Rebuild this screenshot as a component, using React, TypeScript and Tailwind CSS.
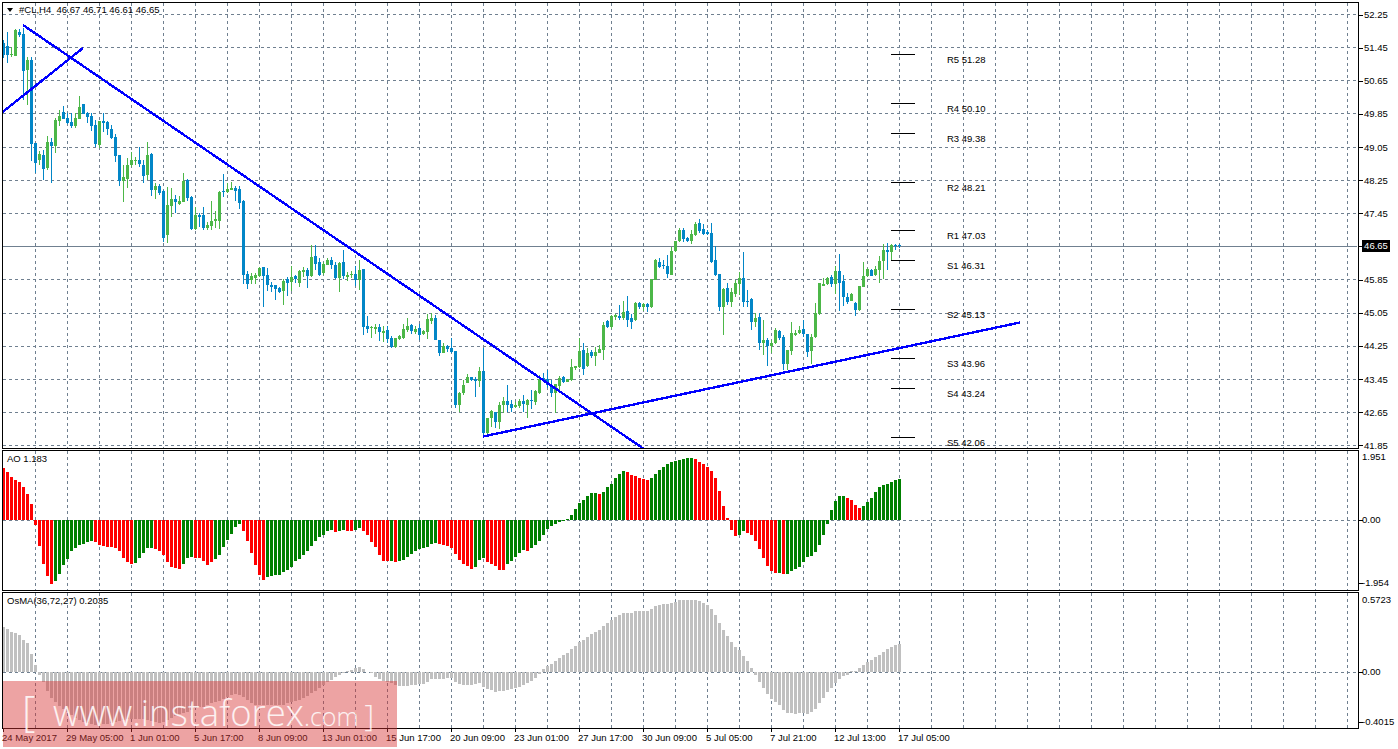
const GRID = '#708090'
const GREEN = '#4cb748'
const BLUE = '#0286c7'

// hi, bodyTop, bodyBottom, lo in page pixels, 1 = up candle
const candles: number[][] = [
  [40,43,55,58,0],[32,46,55,63,0],[47,54,55,57,1],[29,30,56,56,1],[29,32,35,37,0],[28,34,71,100,0],[57,60,70,105,1],[57,60,144,161,0],
  [143,143,163,173,0],[151,154,160,165,1],[150,155,169,180,0],[136,142,168,170,1],[138,142,146,183,0],[118,120,146,153,1],[110,116,121,126,1],[106,112,119,119,0],
  [113,118,123,124,0],[113,122,126,128,0],[113,118,126,128,1],[96,107,119,119,1],[104,104,114,114,0],[112,113,117,123,0],[113,116,126,131,0],[120,125,144,147,0],
  [121,121,145,148,1],[113,121,123,132,0],[121,122,129,135,0],[125,129,138,139,0],[134,137,156,162,0],[155,155,181,186,0],[165,177,181,202,1],[158,165,179,188,1],
  [152,160,165,167,1],[157,160,161,165,1],[147,160,164,167,0],[160,165,176,183,0],[142,155,175,180,1],[153,154,190,196,0],[183,186,190,199,1],[184,186,193,195,0],
  [190,191,238,242,0],[187,205,235,243,1],[188,199,206,217,1],[195,199,202,213,0],[196,201,204,205,1],[173,181,202,202,1],[179,180,198,201,0],[196,197,229,230,0],
  [207,215,229,230,1],[213,215,217,227,0],[207,215,228,230,0],[222,225,228,230,1],[201,221,226,230,1],[211,219,221,228,1],[191,192,221,229,1],[174,191,192,197,0],
  [183,189,192,193,1],[182,188,190,190,1],[186,188,191,201,0],[186,189,203,209,0],[200,201,275,284,0],[271,274,284,289,0],[273,276,280,284,1],[273,275,278,284,1],
  [267,268,276,277,1],[267,267,276,307,0],[268,275,285,291,0],[282,285,287,292,0],[285,285,289,300,0],[287,288,292,293,0],[279,281,291,305,1],[277,279,283,296,0],
  [266,277,282,291,1],[275,276,279,283,0],[270,271,283,287,1],[267,270,272,277,1],[268,270,276,288,0],[245,257,276,277,1],[245,256,264,270,0],[258,262,275,276,0],
  [262,264,273,275,1],[258,260,265,265,1],[257,260,265,269,0],[262,265,278,279,0],[262,263,278,292,1],[250,262,276,279,0],[272,275,277,281,1],[271,274,275,278,1],
  [266,274,280,286,0],[260,270,280,290,1],[269,269,327,335,0],[316,326,329,333,0],[326,327,328,338,1],[324,327,329,334,1],[324,327,332,341,0],[326,331,333,342,1],
  [326,330,339,343,0],[336,338,347,348,0],[338,338,347,348,1],[335,336,339,340,1],[324,329,338,339,1],[318,326,330,332,1],[324,325,331,334,0],[326,329,332,334,1],
  [324,328,335,340,0],[330,331,334,335,1],[314,319,332,339,1],[313,318,321,324,1],[315,318,340,340,0],[340,340,353,356,0],[343,346,353,353,1],[345,346,349,352,0],
  [338,348,352,353,0],[351,351,405,408,0],[392,393,405,412,1],[380,385,393,395,1],[374,377,383,383,1],[377,377,380,381,0],[377,379,381,397,0],[367,371,381,387,1],
  [348,371,433,435,0],[418,418,433,436,1],[410,411,418,427,1],[412,412,422,428,0],[402,405,422,429,1],[397,401,405,413,1],[385,401,405,412,0],[400,404,408,412,0],
  [402,405,407,408,1],[399,401,406,408,1],[395,401,404,412,0],[399,400,405,418,1],[390,400,401,409,0],[390,391,402,405,1],[375,379,393,394,1],[373,378,381,382,0],
  [370,379,385,388,0],[380,385,393,397,0],[384,384,393,413,1],[376,378,386,390,1],[376,377,382,383,0],[379,379,382,382,1],[359,367,380,381,1],[366,366,368,370,1],
  [338,351,367,368,1],[343,350,369,375,0],[348,353,366,367,1],[350,352,356,358,0],[347,352,356,366,1],[345,349,353,353,1],[322,325,350,360,1],[320,321,327,328,0],
  [315,316,327,329,1],[314,315,317,320,1],[305,316,318,320,0],[301,312,318,320,1],[296,311,320,327,0],[314,318,322,329,0],[302,303,320,321,1],[302,303,307,309,0],
  [303,304,307,311,1],[303,304,307,312,0],[279,279,307,308,1],[259,260,280,280,1],[258,262,267,268,0],[260,265,266,269,0],[255,266,274,278,0],[247,251,275,275,1],
  [241,241,251,252,1],[228,230,241,242,1],[228,230,239,242,0],[237,238,241,242,0],[230,234,241,244,1],[222,224,235,236,1],[219,223,231,233,0],[224,229,234,235,0],
  [230,232,234,235,0],[223,233,262,263,0],[246,260,275,276,0],[274,274,307,311,0],[288,289,307,335,1],[283,288,302,305,0],[288,292,302,307,1],[280,283,294,297,1],
  [272,278,284,295,1],[252,278,302,307,0],[290,301,302,307,0],[298,299,322,330,0],[313,318,322,327,1],[313,317,343,350,0],[320,340,343,355,1],[338,340,346,366,0],
  [340,343,346,353,1],[328,330,343,344,1],[330,331,338,340,0],[335,337,364,370,0],[350,350,364,370,1],[322,333,351,355,1],[330,333,335,336,1],[326,330,333,334,1],
  [320,329,334,337,0],[334,334,352,357,0],[334,337,351,364,1],[303,313,337,338,1],[283,283,314,315,1],[278,284,286,286,1],[277,278,284,285,1],[275,277,284,287,0],
  [266,271,284,294,1],[254,271,283,311,0],[275,281,297,306,0],[293,297,302,304,0],[293,294,301,301,1],[302,303,310,316,0],[286,286,310,311,1],[262,276,287,287,1],
  [268,269,276,277,1],[269,270,276,276,0],[266,269,275,276,1],[256,261,270,283,1],[244,250,261,279,1],[243,250,252,270,0],[244,245,252,260,1],[244,245,246,250,0],
  [244,245,246,248,0],
]

const ao = [52,48,43,40,38,33,26,16,-5,-26,-44,-56,-64,-61,-54,-45,-39,-31,-28,-25,-24,-22,-21,-22,-25,-26,-27,-27,-28,-31,-38,-42,-44,-43,-38,-33,-28,-28,-29,-31,-35,-42,-47,-48,-49,-44,-38,-37,-38,-38,-41,-45,-42,-39,-35,-27,-20,-14,-7,-4,-11,-21,-33,-45,-55,-60,-57,-56,-55,-55,-52,-50,-47,-41,-39,-35,-31,-26,-21,-17,-15,-11,-10,-12,-11,-10,
  -11,-11,-10,-8,-11,-15,-22,-27,-35,-41,-41,-41,-42,-41,-40,-37,-34,-31,-29,-28,-27,-24,-23,-24,-25,-26,-28,-34,-40,-44,-46,-49,-47,-40,-38,-42,-44,-46,-50,-50,-44,-41,-37,-33,-30,-31,-28,-25,-21,-15,-9,-6,-4,-2,-1,1,5,11,17,20,24,27,27,26,28,33,36,42,46,49,48,45,44,42,41,40,42,46,50,53,56,58,59,60,61,62,62,61,58,56,
  53,49,42,29,14,2,-10,-16,-15,-11,-13,-15,-21,-29,-38,-46,-51,-53,-53,-54,-54,-51,-49,-47,-42,-37,-36,-32,-25,-15,-4,10,19,24,24,22,20,15,12,14,18,22,28,33,35,36,38,40,41]

// indexes of the red AO bars, as ranges
const aoRed = [[0,12],[23,32],[38,44],[48,52],[60,65],[83,83],[86,87],[90,96],[98,98],[109,117],[121,125],[131,131],[149,149],[156,161],[173,183],[186,193],[195,195],[211,214]]
const isRed = (i: number) => aoRed.some(([a, b]) => i >= a && i <= b)

const osma = [45,43,40,39,37,32,29,18,7,-3,-10,-19,-26,-30,-34,-37,-40,-43,-46,-48,-50,-51,-52,-53,-53,-52,-52,-51,-50,-49,-48,-47,-47,-47,-47,-47,-48,-49,-50,-51,-50,-48,-46,-44,-42,-41,-40,-38,-36,-35,-35,-33,-31,-30,-29,-27,-25,-23,-22,-23,-25,-28,-31,-33,-33,-33,-33,-33,-33,-33,-33,-31,-30,-29,-28,-26,-24,-21,-19,-16,-13,-10,-8,-5,-3,-1,1,2,4,5,3,0,-1,-5,-7,-9,-10,-11,-13,-14,-14,-14,-13,
  -13,-12,-12,-10,-7,-7,-7,-7,-6,-6,-10,-12,-13,-13,-13,-12,-11,-15,-17,-18,-20,-19,-19,-18,-17,-16,-15,-13,-11,-9,-6,-2,3,6,8,11,14,17,19,23,26,30,32,35,38,40,42,46,49,52,55,57,59,59,59,61,61,61,61,63,66,67,68,68,69,70,72,72,72,72,72,71,69,67,63,57,49,42,36,30,25,22,16,11,4,-3,-10,-16,-22,-27,-30,-33,-38,-41,-41,-42,-41,-41,-42,-40,-37,-31,-26,-20,-16,-11,-7,-4,-3,1,1,4,7,10,12,15,17,20,23,25,27,28]

const priceRows = [14,47,80,113,147,180,213,279,313,346,379,412,445]
const prices = ['52.25','51.45','50.65','49.85','49.05','48.25','47.45','46.65','45.85','45.05','44.25','43.45','42.65','41.85']
const gridCols = Array.from({ length: 42 }, (_, i) => 35 + 32 * i)

const pivots = [
  ['R5 51.28', 54, 59], ['R4 50.10', 103, 108], ['R3 49.38', 133, 138], ['R2 48.21', 182, 187], ['R1 47.03', 230, 235],
  ['S1 46.31', 260, 265], ['S2 45.13', 309, 314], ['S3 43.96', 358, 363], ['S4 43.24', 388, 393], ['S5 42.06', 437, 442],
] as const

const times = ['24 May 2017','29 May 05:00','1 Jun 01:00','5 Jun 17:00','8 Jun 09:00','13 Jun 01:00','15 Jun 17:00','20 Jun 09:00','23 Jun 01:00','27 Jun 17:00','30 Jun 09:00','5 Jul 05:00','7 Jul 21:00','12 Jul 13:00','17 Jul 05:00']

function Grid({ top, bottom, rows }: { top: number; bottom: number; rows: number[] }) {
  return (
    <g stroke={GRID} strokeWidth={1} strokeDasharray="3 3" shapeRendering="crispEdges">
      {gridCols.map((x) => (
        <line key={x} x1={x + 0.5} x2={x + 0.5} y1={top} y2={bottom} />
      ))}
      {rows.map((y) => (
        <line key={y} x1={3} x2={1357} y1={y + 0.5} y2={y + 0.5} />
      ))}
    </g>
  )
}

function PriceChart() {
  return (
    <svg viewBox="3 3 1355 445" className="block w-[1355px] h-[445px]">
      <Grid top={3} bottom={448} rows={priceRows} />
      <line x1={3} x2={1357} y1={246.5} y2={246.5} stroke={GRID} shapeRendering="crispEdges" />
      <g shapeRendering="crispEdges">
        {candles.map(([hi, top, bot, lo, up], i) => {
          const x = 3 + 4 * i
          const c = up ? GREEN : BLUE
          return (
            <g key={i} fill={c}>
              <rect x={x} y={hi} width={1} height={lo - hi} />
              <rect x={x - 1} y={top} width={3} height={Math.max(bot - top, 1)} />
            </g>
          )
        })}
      </g>
      <g stroke="#0000ff" strokeWidth={2.4} shapeRendering="crispEdges">
        <line x1={23} y1={25} x2={644} y2={449} />
        <line x1={2} y1={112.5} x2={83} y2={48} />
        <line x1={483} y1={436.5} x2={1020} y2={322.5} />
      </g>
      {pivots.map(([label, y, ty]) => (
        <g key={label}>
          <rect x={891} y={y} width={24} height={1} fill="#000" shapeRendering="crispEdges" />
          <text x={947} y={ty + 3.5} fontSize={9.5} fill="#000" style={{ fontFamily: '"Liberation Sans", sans-serif' }}>
            {label}
          </text>
        </g>
      ))}
    </svg>
  )
}

function AoChart() {
  return (
    <svg viewBox="3 451 1355 139" className="block w-[1355px] h-[139px]">
      <Grid top={451} bottom={590} rows={[520]} />
      <g shapeRendering="crispEdges">
        {ao.map((v, i) => (
          <rect
            key={i}
            x={2 + 4 * i}
            y={v > 0 ? 520 - v : 520}
            width={3}
            height={Math.abs(v)}
            fill={isRed(i) ? '#ff0000' : '#008000'}
          />
        ))}
      </g>
    </svg>
  )
}

function OsmaChart() {
  return (
    <svg viewBox="3 593 1355 135" className="block w-[1355px] h-[135px]">
      <Grid top={593} bottom={728} rows={[672]} />
      <g shapeRendering="crispEdges" fill="#c0c0c0">
        {osma.map((v, i) => (
          <rect key={i} x={2 + 4 * i} y={v > 0 ? 672 - v : 672} width={3} height={Math.abs(v)} />
        ))}
      </g>
    </svg>
  )
}

function AxisLabel({ text, tick = true, indent = false }: { text: string; tick?: boolean; indent?: boolean }) {
  return (
    <div className="flex items-center h-3 leading-3 whitespace-nowrap">
      <span className={tick ? 'w-[4px] h-px bg-black' : 'w-[4px] h-px'} />
      <span className={indent ? 'ml-px' : '-ml-px'}>{text}</span>
    </div>
  )
}

export default function App() {
  return (
    <div className="relative w-[1398px] h-[749px] overflow-hidden bg-white pl-[2px] pt-[2px] text-[9.5px] text-black font-['Liberation_Sans',sans-serif]">
      <div className="flex h-[447px]">
        <div className="relative w-[1357px] border border-black">
          <PriceChart />
          <div className="absolute left-[4px] top-[1px] flex items-center gap-[6px] h-3 whitespace-pre">
            <span className="w-0 h-0 border-x-[3px] border-x-transparent border-t-[4px] border-t-black" />
            <span>#CL,H4  46.67 46.71 46.61 46.65</span>
          </div>
        </div>
        <div className="relative flex flex-col justify-between h-[443px] mt-[7px]">
          {prices.map((p) => (
            <AxisLabel key={p} text={p} indent />
          ))}
          <div className="absolute left-[3px] top-[231px] w-[28px] h-[12px] leading-3 bg-black text-white text-center">46.65</div>
        </div>
      </div>

      <div className="flex h-[141px] mt-px">
        <div className="relative w-[1357px] border border-black">
          <AoChart />
          <div className="absolute left-[4px] top-[2px] h-3 leading-3">AO 1.183</div>
        </div>
        <div className="flex flex-col justify-between h-[138px] mt-px">
          <AxisLabel text="1.951" tick={false} />
          <AxisLabel text="0.00" />
          <AxisLabel text="-1.954" />
        </div>
      </div>

      <div className="flex h-[137px] mt-px">
        <div className="relative w-[1357px] border border-black">
          <OsmaChart />
          <div className="absolute left-[4px] top-[2px] h-3 leading-3">OsMA(36,72,27) 0.2035</div>
        </div>
        <div className="flex flex-col mt-[2px]">
          <AxisLabel text="0.5723" tick={false} />
          <div className="mt-[60px]">
            <AxisLabel text="0.00" />
          </div>
          <div className="mt-[38px]">
            <AxisLabel text="-0.4015" />
          </div>
        </div>
      </div>

      <div className="flex">
        {times.map((t) => (
          <div key={t} className="w-[64px] shrink-0 whitespace-nowrap">
            <div className="ml-px w-px h-[3px] bg-black" />
            <div className="h-3 leading-3">{t}</div>
          </div>
        ))}
      </div>

      <div className="absolute left-[3px] top-[681px] w-[394px] h-[66px] bg-[#d73232]/45 text-white/85 font-['Open_Sans',sans-serif] font-light whitespace-nowrap">
        <div className="flex items-baseline pl-[19px] pt-[7px] leading-[44px]">
          <span className="text-[42px] w-[31px]">[</span>
          <span className="text-[36.5px]">www.instaforex</span>
          <span className="text-[25px]">.com</span>
          <span className="text-[30px] ml-[6px]">]</span>
        </div>
      </div>
    </div>
  )
}
